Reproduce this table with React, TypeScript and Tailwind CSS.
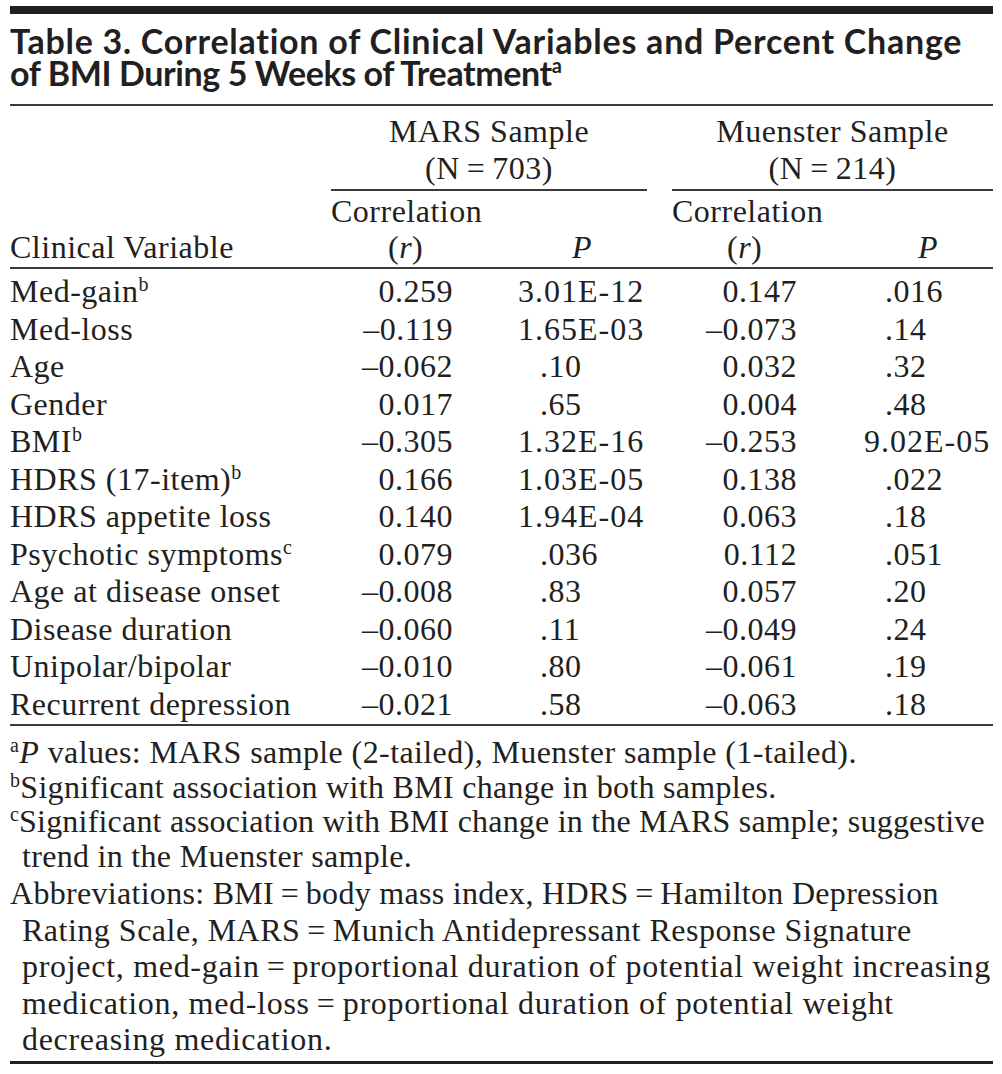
const ROWS: Array<[string, string, string, string, string, string]> = [
  ["Med-gain", "b", "0.259", "3.01E-12", "0.147", ".016"],
  ["Med-loss", "", "–0.119", "1.65E-03", "–0.073", ".14"],
  ["Age", "", "–0.062", ".10", "0.032", ".32"],
  ["Gender", "", "0.017", ".65", "0.004", ".48"],
  ["BMI", "b", "–0.305", "1.32E-16", "–0.253", "9.02E-05"],
  ["HDRS (17-item)", "b", "0.166", "1.03E-05", "0.138", ".022"],
  ["HDRS appetite loss", "", "0.140", "1.94E-04", "0.063", ".18"],
  ["Psychotic symptoms", "c", "0.079", ".036", "0.112", ".051"],
  ["Age at disease onset", "", "–0.008", ".83", "0.057", ".20"],
  ["Disease duration", "", "–0.060", ".11", "–0.049", ".24"],
  ["Unipolar/bipolar", "", "–0.010", ".80", "–0.061", ".19"],
  ["Recurrent depression", "", "–0.021", ".58", "–0.063", ".18"],
];

const GRID = "grid grid-cols-[321px_159px_157px_25px_188px_133px] whitespace-nowrap";

// thin spaces around "=" as in the typeset original
const EQ = "\u2009=\u2009";

function Sup({ children }: { children: string }) {
  return (
    <span className="relative -top-[11px] text-[20px] leading-none">
      {children}
    </span>
  );
}

export default function App() {
  return (
    <div className="min-h-[1074px] w-[1002px] bg-white pt-[6px] font-['Liberation_Serif',serif] text-[32px] tracking-[0.5px] text-[#231f20]">
      <div className="ml-[10px] w-[983px]">
        <div className="h-[8px] bg-[#231f20]" />

        <h1 className="mt-[11px] whitespace-nowrap font-['Lato',sans-serif] text-[34px] font-bold leading-[32px] [font-variant-ligatures:none]">
          <div className="tracking-[0.75px]">
            Table 3. Correlation of Clinical Variables and Percent Change
          </div>
          <div className="tracking-[-0.4px]">
            of BMI During 5 Weeks of Treatment
            <span className="relative -top-[13px] text-[20px] leading-none">a</span>
          </div>
        </h1>
        <div className="mt-[15px] h-[2px] bg-[#3a3a3a]" />

        {/* spanners */}
        <div className={`${GRID} pt-[7px]`}>
          <div />
          <div className="col-span-2 border-b-2 border-[#3a3a3a] pb-[2px] text-center leading-[37px]">
            MARS Sample
            <br />
            (N{EQ}703)
          </div>
          <div />
          <div className="col-span-2 border-b-2 border-[#3a3a3a] pb-[2px] text-center leading-[37px]">
            Muenster Sample
            <br />
            (N{EQ}214)
          </div>
        </div>

        {/* column heads */}
        <div className={`${GRID} items-end pt-[2px] pb-[2px] leading-[36px]`}>
          <div>Clinical Variable</div>
          <div>
            <div>Correlation</div>
            <div className="pl-[57px]">
              (<i>r</i>)
            </div>
          </div>
          <div className="pl-[82px] italic">P</div>
          <div />
          <div>
            <div>Correlation</div>
            <div className="pl-[55px]">
              (<i>r</i>)
            </div>
          </div>
          <div className="pl-[58px] italic">P</div>
        </div>
        <div className="h-[2px] bg-[#3a3a3a]" />

        <div className="pt-[4px] pb-[1px]">
          {ROWS.map(([label, sup, mr, mp, nr, np]) => (
            <div key={label} className={`${GRID} leading-[37.5px]`}>
              <div>
                {label}
                {sup && <Sup>{sup}</Sup>}
              </div>
              <div className="pr-[37px] text-right">{mr}</div>
              <div className={mp.startsWith(".") ? "pl-[50px]" : "pl-[28px] tracking-[1px]"}>
                {mp}
              </div>
              <div />
              <div className="pr-[63px] text-right">{nr}</div>
              <div className={np.startsWith(".") ? "pl-[25px]" : "pl-[4px] tracking-[1px]"}>
                {np}
              </div>
            </div>
          ))}
        </div>
        <div className="h-[2px] bg-[#3a3a3a]" />

        <div className="whitespace-nowrap">
          <div className="pt-[9px] leading-[34.5px]">
            <p className="tracking-[0.4px]">
              <Sup>a</Sup>
              <i>P</i> values: MARS sample (2-tailed), Muenster sample (1-tailed).
            </p>
            <p className="tracking-[0.3px]">
              <Sup>b</Sup>Significant association with BMI change in both samples.
            </p>
            <p className="tracking-[0.2px]">
              <Sup>c</Sup>Significant association with BMI change in the MARS sample; suggestive
            </p>
            <p className="pl-[12px] tracking-[0.3px]">trend in the Muenster sample.</p>
          </div>
          <div className="pt-[2px] pb-[3px] leading-[36.5px]">
            <p className="tracking-[0.3px]">
              Abbreviations: BMI{EQ}body mass index, HDRS{EQ}Hamilton Depression
            </p>
            <div className="pl-[12px]">
              <p className="tracking-[0.5px]">
                Rating Scale, MARS{EQ}Munich Antidepressant Response Signature
              </p>
              <p className="tracking-[0.7px]">
                project, med-gain{EQ}proportional duration of potential weight increasing
              </p>
              <p className="tracking-[0.7px]">
                medication, med-loss{EQ}proportional duration of potential weight
              </p>
              <p className="tracking-[0.7px]">decreasing medication.</p>
            </div>
          </div>
        </div>
        <div className="h-[3px] bg-[#231f20]" />
      </div>
    </div>
  );
}
